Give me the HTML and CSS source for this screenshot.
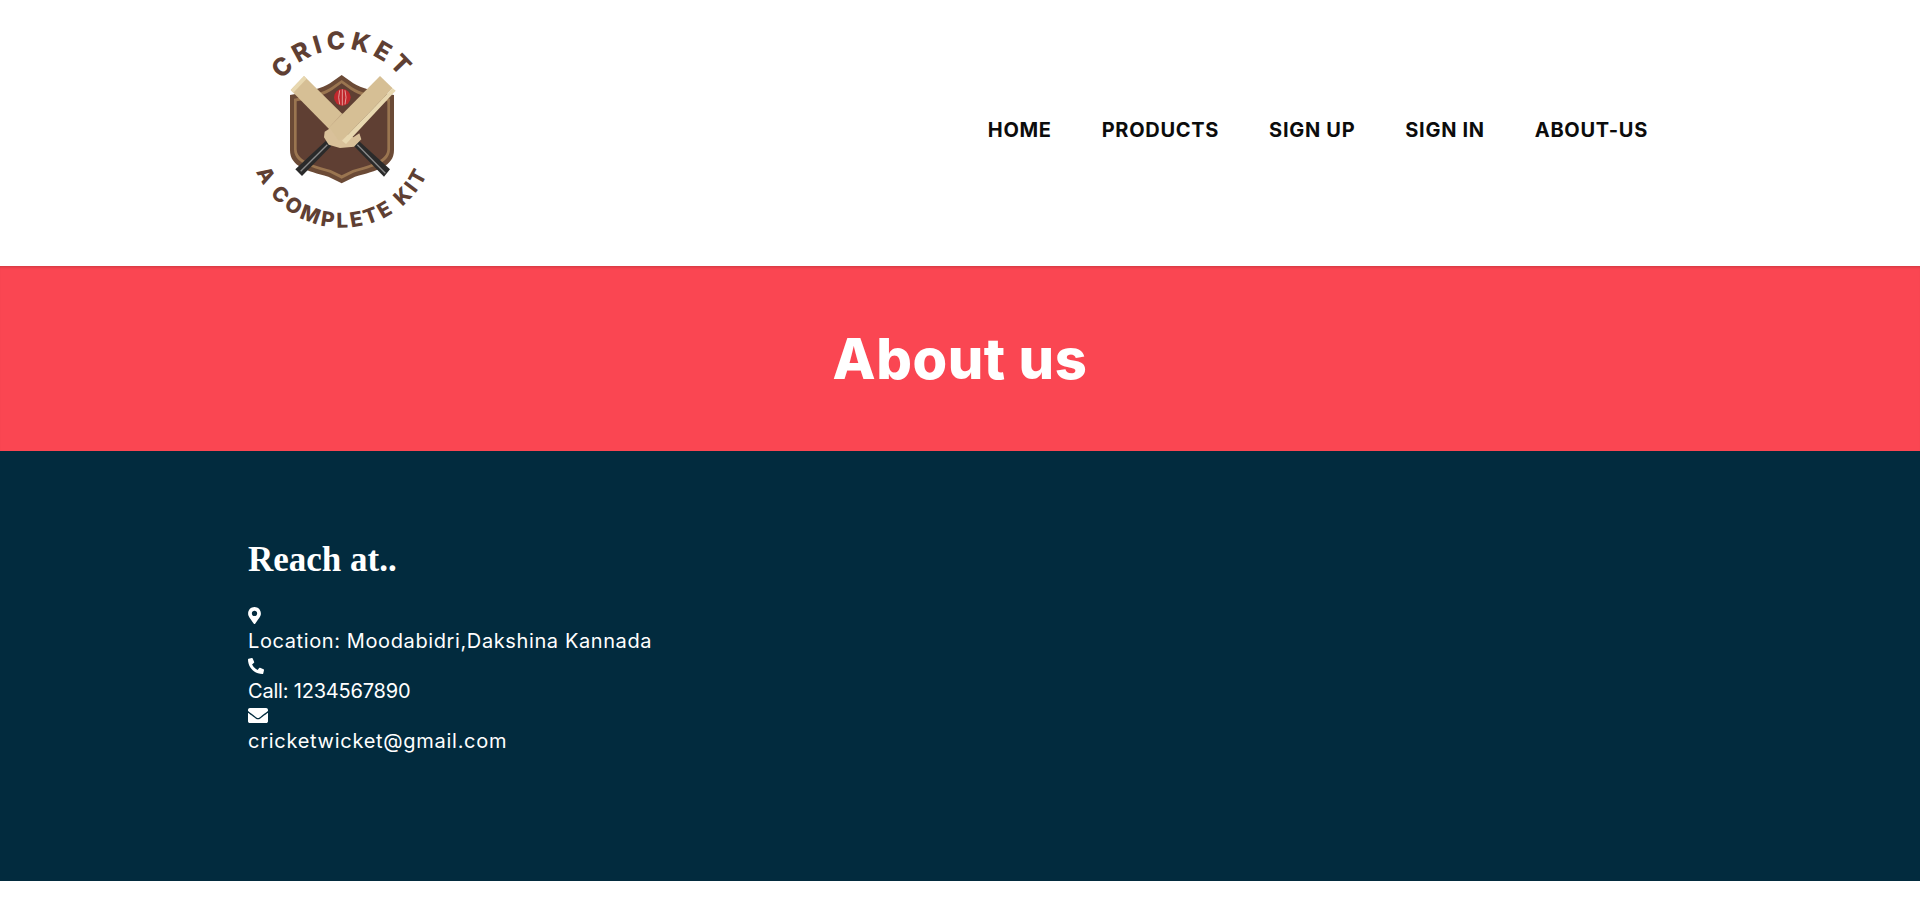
FILE: index.html
```html
<!DOCTYPE html>
<html lang="en">
<head>
<meta charset="utf-8">
<title>About us</title>
<link rel="stylesheet" href="styles.css">
</head>
<body>
<header class="site-header">
  <svg class="logo" viewBox="0 0 630 660" role="img" aria-label="Cricket, a complete kit">
    <defs>
      <path id="arc-top" d="M 84 312 A 224 224 0 0 1 532 312"/>
      <path id="arc-bottom" d="M 24 340 A 283 283 0 0 0 590 340"/>
    </defs>
    <path class="shield" d="M305 165 L340 190 Q375 212 462 225 V390 C462 440 410 452 345 470 L305 490 L265 470 C200 452 150 440 150 390 V225 Q235 212 270 190 Z"/>
    <path class="shield-line" d="M305 180 L336 202 Q370 224 450 236 V388 C450 428 402 441 340 458 L305 476 L270 458 C208 441 162 428 162 388 V236 Q240 224 274 202 Z"/>
    <path class="shield-fill" d="M305 190 L333 210 Q365 232 442 244 V386 C442 420 398 433 338 450 L305 466 L272 450 C212 433 170 420 170 386 V244 Q245 232 277 210 Z"/>
    <circle class="ball" cx="307" cy="232" r="25"/>
    <path class="seam" d="M299 211 Q293 232 299 253 M307 208 V256 M315 211 Q321 232 315 253"/>
    <path class="grip" d="M258 362 L274 378 L186 468 L166 448 Z"/>
    <path class="grip-light" d="M262 374 L182 454"/>
    <path class="grip" d="M356 362 L450 448 L432 470 L342 378 Z"/>
    <path class="grip-light" d="M352 374 L436 460"/>
    <path class="bat" d="M152 210 L192 168 L335 310 L290 350 Z"/>
    <path class="bat-edge" d="M152 210 L160 218 L200 176 L192 168 Z"/>
    <path class="bat-shade" d="M268 322 L306 280 L322 296 L284 338 Z"/>
    <path class="hand" d="M254 335 L275 322 L340 352 L358 340 L364 358 L342 380 L300 384 L266 374 L252 352 Z"/>
    <path class="bat" d="M268 322 L420 168 L458 205 L318 350 L296 362 Z"/>
    <path class="bat-edge" d="M458 205 L467 212 L318 372 L306 362 Z"/>
    <text class="logo-text"><textPath href="#arc-top" startOffset="50%" text-anchor="middle">CRICKET</textPath></text>
    <text class="logo-text logo-text-small"><textPath href="#arc-bottom" startOffset="50%" text-anchor="middle">A COMPLETE KIT</textPath></text>
  </svg>
  <nav class="main-nav">
    <a href="#">HOME</a>
    <a href="#">PRODUCTS</a>
    <a href="#">SIGN UP</a>
    <a href="#">SIGN IN</a>
    <a href="#">ABOUT-US</a>
  </nav>
</header>
<section class="banner">
  <h1>About us</h1>
</section>
<footer class="contact">
  <h2>Reach at..</h2>
  <ul class="contact-list">
    <li>
      <span class="icon-row"><svg class="icon icon-pin" viewBox="0 0 384 512"><path d="M172.268 501.67C26.97 291.031 0 269.413 0 192 0 85.961 85.961 0 192 0s192 85.961 192 192c0 77.413-26.97 99.031-172.268 309.67-9.535 13.774-29.93 13.773-39.464 0zM192 272c44.183 0 80-35.817 80-80s-35.817-80-80-80-80 35.817-80 80 35.817 80 80 80z"/></svg></span>
      <span class="line line-location">Location: Moodabidri,Dakshina Kannada</span>
    </li>
    <li>
      <span class="icon-row"><svg class="icon icon-phone" viewBox="0 0 512 512"><path d="M497.39 361.8l-112-48a24 24 0 0 0-28 6.9l-49.6 60.6A370.66 370.66 0 0 1 130.6 204.11l60.6-49.6a23.94 23.94 0 0 0 6.9-28l-48-112A24.16 24.16 0 0 0 122.6.61l-104 24A24 24 0 0 0 0 48c0 256.5 207.9 464 464 464a24 24 0 0 0 23.4-18.6l24-104a24.29 24.29 0 0 0-14.01-27.6z"/></svg></span>
      <span class="line line-call">Call: 1234567890</span>
    </li>
    <li>
      <span class="icon-row"><svg class="icon icon-mail" viewBox="0 64 512 384"><path d="M502.3 190.8c3.9-3.1 9.7-.2 9.7 4.7V400c0 26.5-21.5 48-48 48H48c-26.5 0-48-21.5-48-48V195.6c0-5 5.7-7.8 9.7-4.7 22.4 17.4 52.1 39.5 154.1 113.6 21.1 15.4 56.7 47.8 92.2 47.6 35.7.3 72-32.8 92.3-47.6 102-74.1 131.6-96.3 154-113.7zM256 320c23.2.4 56.6-29.2 73.4-41.4 132.7-96.3 142.8-104.7 173.4-128.7 5.8-4.5 9.2-11.5 9.2-18.9v-19c0-26.5-21.5-48-48-48H48C21.5 64 0 85.5 0 112v19c0 7.4 3.4 14.3 9.2 18.9 30.6 23.9 40.7 32.4 173.4 128.7 16.8 12.2 50.2 41.8 73.4 41.4z"/></svg></span>
      <span class="line line-mail">cricketwicket@gmail.com</span>
    </li>
  </ul>
</footer>
</body>
</html>
```
FILE: styles.css
```css
* { box-sizing: border-box; }
html, body { margin: 0; padding: 0; }
body { background: #fff; font-family: "Inter", "Noto Sans", sans-serif; }

.site-header {
  height: 266px;
  display: flex;
  align-items: center;
  justify-content: space-between;
  padding: 0 272px 0 240px;
  background: #fff;
}
.logo { display: block; width: 210px; height: 220px; margin-top: -6px; }
.shield { fill: #6b4a36; }
.shield-line { fill: #9a7550; }
.shield-fill { fill: #5f3f33; }
.ball { fill: #c1272d; }
.seam { fill: none; stroke: #f1d9d0; stroke-width: 2; }
.grip { fill: #2a2a2a; }
.grip-light { fill: none; stroke: #8a8a8a; stroke-width: 4; }
.bat { fill: #d6bf95; }
.bat-edge { fill: #e8d8b0; }
.bat-shade { fill: #bfa580; }
.hand { fill: #d9c19a; }
.logo-text { font-family: "Inter", sans-serif; font-weight: 800; font-size: 74px; letter-spacing: 13px; fill: #5f3f33; }
.logo-text-small { font-size: 62px; letter-spacing: 9px; }

.main-nav { display: flex; gap: 50px; margin-top: -6px; }
.main-nav a {
  color: #0c0c0c;
  font-size: 20px;
  font-weight: 700;
  letter-spacing: 0.7px;
  text-decoration: none;
  line-height: 26px;
}

.banner {
  height: 185px;
  background: #fa4652;
  box-shadow: inset 0 3px 3px -2px rgba(120, 30, 30, 0.35);
  display: flex;
  align-items: center;
  justify-content: center;
}
.banner h1 {
  margin: 0;
  color: #fff;
  font-size: 56px;
  font-weight: 800;
  letter-spacing: 0.55px;
  line-height: 68px;
}

.contact {
  height: 430px;
  background: #022b3e;
  color: #fff;
  padding: 88px 248px 0;
}
.contact h2 {
  margin: 0 0 23px;
  font-family: "Liberation Serif", serif;
  font-size: 35px;
  font-weight: 700;
  line-height: 41px;
}
.contact-list { list-style: none; margin: 0; padding: 0; }
.contact-list li { display: flex; flex-direction: column; align-items: flex-start; }
.icon-row { display: flex; align-items: center; height: 25px; }
.line { font-size: 20px; line-height: 25px; padding-top: 1px; margin-bottom: -1px; }
.line-location { letter-spacing: 0.61px; }
.line-call { letter-spacing: -0.2px; }
.line-mail { letter-spacing: 0.72px; }
.icon { display: block; fill: #fff; }
.icon-pin { height: 17px; width: 13px; }
.icon-phone { height: 16px; width: 16px; }
.icon-mail { height: 15px; width: 20px; }
```
